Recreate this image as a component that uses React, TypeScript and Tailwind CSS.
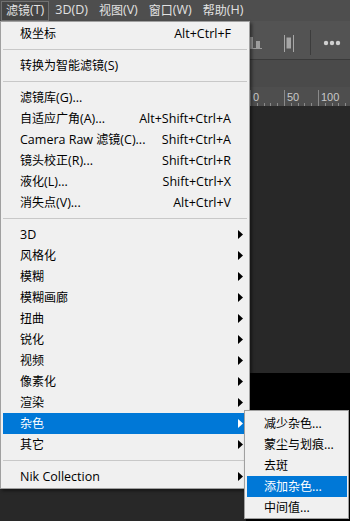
import React from "react";

type Row =
  | { kind: "sep" }
  | { kind: "item"; label: string; shortcut?: string; sub?: boolean; hl?: boolean };

const it = (label: string, extra: Partial<{ shortcut: string; sub: boolean; hl: boolean }> = {}): Row => ({
  kind: "item",
  label,
  ...extra,
});
const sep: Row = { kind: "sep" };

const mainRows: Row[] = [
  it("极坐标", { shortcut: "Alt+Ctrl+F" }),
  sep,
  it("转换为智能滤镜(S)"),
  sep,
  it("滤镜库(G)..."),
  it("自适应广角(A)...", { shortcut: "Alt+Shift+Ctrl+A" }),
  it("Camera Raw 滤镜(C)...", { shortcut: "Shift+Ctrl+A" }),
  it("镜头校正(R)...", { shortcut: "Shift+Ctrl+R" }),
  it("液化(L)...", { shortcut: "Shift+Ctrl+X" }),
  it("消失点(V)...", { shortcut: "Alt+Ctrl+V" }),
  sep,
  it("3D", { sub: true }),
  it("风格化", { sub: true }),
  it("模糊", { sub: true }),
  it("模糊画廊", { sub: true }),
  it("扭曲", { sub: true }),
  it("锐化", { sub: true }),
  it("视频", { sub: true }),
  it("像素化", { sub: true }),
  it("渲染", { sub: true }),
  it("杂色", { sub: true, hl: true }),
  it("其它", { sub: true }),
  sep,
  it("Nik Collection", { sub: true }),
];

const subRows: Row[] = [
  it("减少杂色..."),
  it("蒙尘与划痕..."),
  it("去斑"),
  it("添加杂色...", { hl: true }),
  it("中间值..."),
];

/* CJK runs at 12px, Latin runs slightly larger (the reference's UI font has wider Latin glyphs) */
function Txt({ s }: { s: string }) {
  const parts = s.split(/([\u3000-\u9fff]+)/).filter((p) => p.length > 0);
  return (
    <>
      {parts.map((p, i) =>
        /[\u3000-\u9fff]/.test(p) ? (
          <span key={i} className="text-[12px]">
            {p}
          </span>
        ) : (
          <span key={i}>{p}</span>
        )
      )}
    </>
  );
}

function Arrow({ white }: { white?: boolean }) {
  return (
    <svg width="5" height="9" viewBox="0 0 5 9" className="block">
      <path d="M0 0L5 4.5L0 9Z" fill={white ? "#ffffff" : "#000000"} />
    </svg>
  );
}

function MenuRows({ rows }: { rows: Row[] }) {
  return (
    <>
      {rows.map((r, i) =>
        r.kind === "sep" ? (
          <div key={i} className="flex h-[11px] items-center">
            <div className="h-px w-full bg-[#c8c8c8]" />
          </div>
        ) : (
          <div
            key={i}
            className={`flex h-[21px] items-center pl-[17px] leading-[21px] ${
              r.hl ? "bg-[#0078d7] text-white" : "text-black"
            }`}
          >
            <span className="flex-1 whitespace-nowrap">
              <Txt s={r.label} />
            </span>
            {r.shortcut && <span className="mr-[16px] whitespace-nowrap">{r.shortcut}</span>}
            {r.sub && (
              <span className="mr-[4px] flex">
                <Arrow white={r.hl} />
              </span>
            )}
          </div>
        )
      )}
    </>
  );
}

const barItems = ["3D(D)", "视图(V)", "窗口(W)", "帮助(H)"];

export default function App() {
  return (
    <div className="relative flex h-[521px] w-[350px] flex-col overflow-hidden bg-[#282828] font-['Open_Sans','Noto_Sans_CJK_SC',sans-serif] text-[12.5px]">
      {/* menu bar */}
      <div className="flex h-[21px] shrink-0 items-center bg-[#4e4e4e] text-[#e2e2e2]">
        <div className="ml-[1px] flex h-[20px] items-center border border-[#707070] bg-[#444444] px-[4px]">
          <Txt s="滤镜(T)" />
        </div>
        {barItems.map((b) => (
          <div key={b} className="ml-[1px] flex h-[20px] items-center px-[5px]">
            <Txt s={b} />
          </div>
        ))}
      </div>

      {/* options toolbar */}
      <div className="flex h-[39px] shrink-0 border-b border-[#3a3a3a] bg-[#535353] pl-[248px]">
        <svg width="102" height="38" viewBox="0 0 102 38">
          <rect x="2" y="16" width="3" height="11" fill="#9c9c9c" />
          <rect x="8" y="20" width="4" height="7" fill="#9c9c9c" />
          <rect x="0" y="27" width="14" height="1" fill="#9c9c9c" />
          <rect x="36" y="14" width="1" height="17" fill="#a6a6a6" />
          <rect x="45" y="14" width="1" height="17" fill="#a6a6a6" />
          <rect x="38.5" y="16.5" width="4.5" height="11" fill="#a6a6a6" />
          <rect x="62" y="9" width="1" height="25" fill="#3c3c3c" />
          <circle cx="78" cy="22" r="2.2" fill="#d0d0d0" />
          <circle cx="84" cy="22" r="2.2" fill="#d0d0d0" />
          <circle cx="90" cy="22" r="2.2" fill="#d0d0d0" />
        </svg>
      </div>

      {/* tab band */}
      <div className="h-[27px] shrink-0 bg-[#4a4a4a]" />

      {/* ruler */}
      <div className="h-[19px] shrink-0 bg-[#4e4e4e]">
        <svg width="350" height="19" viewBox="0 0 350 19" className="block">
          {[250, 284, 318].map((x) => (
            <rect key={x} x={x} y="3" width="1" height="16" fill="#8a8a8a" />
          ))}
          {[256.8, 263.6, 270.4, 277.2, 290.8, 297.6, 304.4, 311.2, 324.8, 331.6, 338.4, 345.2].map((x) => (
            <rect key={x} x={Math.round(x)} y="16" width="1" height="3" fill="#8a8a8a" />
          ))}
          <text x="253" y="14" fontSize="11" fill="#c8c8c8" fontFamily="'Liberation Sans', sans-serif">
            0
          </text>
          <text x="287" y="14" fontSize="11" fill="#c8c8c8" fontFamily="'Liberation Sans', sans-serif">
            50
          </text>
          <text x="321" y="14" fontSize="11" fill="#c8c8c8" fontFamily="'Liberation Sans', sans-serif">
            100
          </text>
        </svg>
      </div>

      {/* canvas */}
      <div className="h-[267px] shrink-0 bg-[#282828]" />
      <div className="flex flex-1">
        <div className="w-[246px] bg-[#282828]" />
        <div className="flex-1 bg-black" />
      </div>

      {/* main dropdown */}
      <div className="absolute left-0 top-[21px] w-[250px] border border-[#a0a0a0] bg-[#f0f0f0] px-[2px] py-[1px] shadow-[2px_2px_3px_rgba(0,0,0,0.45)]">
        <MenuRows rows={mainRows} />
      </div>

      {/* submenu */}
      <div className="absolute left-[244px] top-[410px] w-[105px] border border-[#a0a0a0] bg-[#f0f0f0] pb-0 pl-[2px] pr-[1px] pt-[2px] shadow-[2px_2px_3px_rgba(0,0,0,0.45)]">
        <MenuRows rows={subRows} />
      </div>
    </div>
  );
}
